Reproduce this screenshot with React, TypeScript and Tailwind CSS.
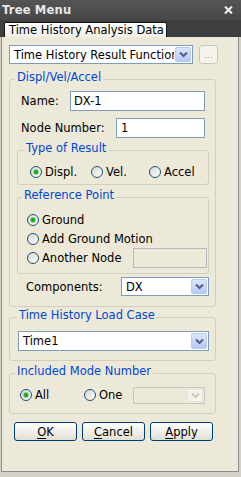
import React from "react";

function Chevron({ disabled }: { disabled?: boolean }) {
  return (
    <svg width="9" height="7" viewBox="0 0 9 7">
      <path
        d="M1 1.5 L4.5 5 L8 1.5"
        fill="none"
        stroke={disabled ? "#c9c7ba" : "#4d6185"}
        strokeWidth="2"
      />
    </svg>
  );
}

function Combo({
  text,
  className,
  disabled,
}: {
  text?: string;
  className: string;
  disabled?: boolean;
}) {
  return (
    <div
      className={`flex shrink-0 items-stretch border ${
        disabled ? "border-[#c9c7ba] bg-[#ece9d8]" : "border-[#7f9db9] bg-white"
      } ${className}`}
    >
      <div className="flex min-w-0 flex-1 items-center overflow-hidden whitespace-nowrap pl-[4px]">
        {text}
      </div>
      <div
        className={`m-[1px] flex w-[16px] shrink-0 items-center justify-center rounded-[2px] border ${
          disabled
            ? "border-[#e8e6dc] bg-[#f4f3ee]"
            : "border-[#b9cbf3] bg-gradient-to-b from-[#dbe6fd] to-[#b6c9f5]"
        }`}
      >
        <Chevron disabled={disabled} />
      </div>
    </div>
  );
}

function Input({ text, className, disabled }: { text?: string; className: string; disabled?: boolean }) {
  return (
    <div
      className={`flex shrink-0 items-center border pl-[3px] ${
        disabled ? "border-[#b5b9be] bg-[#ece9d8]" : "border-[#7f9db9] bg-white"
      } ${className}`}
    >
      {text}
    </div>
  );
}

function Radio({ checked }: { checked?: boolean }) {
  return (
    <span className="flex h-[12px] w-[12px] shrink-0 items-center justify-center rounded-full border border-[#1c5180] bg-gradient-to-br from-[#d8d6cc] to-white">
      {checked && (
        <span className="h-[4px] w-[4px] rounded-full bg-[#21a121] shadow-[0_0_0_1px_#7cd87c]" />
      )}
    </span>
  );
}

function RadioItem({ label, checked, className }: { label: string; checked?: boolean; className?: string }) {
  return (
    <div className={`flex items-center gap-[3px] ${className ?? ""}`}>
      <Radio checked={checked} />
      <span>{label}</span>
    </div>
  );
}

function Group({
  label,
  legendClass,
  className,
  children,
}: {
  label: string;
  legendClass: string;
  className?: string;
  children: React.ReactNode;
}) {
  return (
    <fieldset className={`rounded-[3px] border border-[#d0d0bf] p-0 ${className ?? ""}`}>
      <legend className={`px-[2px] pb-[4px] leading-[14px] text-[#0046d5] ${legendClass}`}>{label}</legend>
      {children}
    </fieldset>
  );
}

function Btn({ first, rest }: { first: string; rest: string }) {
  return (
    <div className="flex h-[19px] w-[63px] items-center justify-center rounded-[3px] border border-[#003c74] bg-gradient-to-b from-white to-[#e2dfd3]">
      <span>
        <span className="underline underline-offset-[2px]">{first}</span>
        {rest}
      </span>
    </div>
  );
}

export default function App() {
  return (
    <div className="flex h-[477px] w-[241px] flex-col bg-[#d4d0c8] font-['DejaVu_Sans',sans-serif] text-[11.5px] leading-[14px] text-black">
      {/* title bar */}
      <div className="flex h-[20px] shrink-0 items-center justify-between bg-gradient-to-b from-[#555555] to-[#474747] pl-[2px] pr-[8px]">
        <span className="text-[11.5px] font-bold tracking-[0.2px] text-[#e8e8e8]">Tree Menu</span>
        <svg width="9" height="8" viewBox="0 0 9 8">
          <path d="M1 0.5 L8 7.5 M8 0.5 L1 7.5" stroke="#f2f2f2" strokeWidth="2" />
        </svg>
      </div>
      {/* tab strip */}
      <div className="flex h-[17px] shrink-0 items-end bg-[#3f3f3f] pl-[4px]">
        <div className="flex h-[15px] w-[163px] items-center rounded-t-[2px] border border-b-0 border-[#151515] bg-gradient-to-b from-white to-[#f1efe6] pl-[4px] leading-[13px]">
          Time History Analysis Data
        </div>
      </div>
      {/* body */}
      <div className="ml-[1px] flex h-[435px] w-[238px] shrink-0 flex-col border-x border-b border-[#8e8e8e] bg-[#ece9d8] pt-[8px]">
        {/* top select row */}
        <div className="ml-[7px] flex items-center gap-[6px]">
          <Combo text="Time History Result Function" className="h-[19px] w-[184px]" />
          <div className="flex h-[19px] w-[19px] items-end justify-center rounded-[3px] border border-[#c9c7ba] bg-[#f5f4ea] pb-[3px] text-[9px] leading-[9px] text-[#aca899]">
            ...
          </div>
        </div>

        {/* Displ/Vel/Accel */}
        <Group label="Displ/Vel/Accel" legendClass="ml-[5px]" className="ml-[7px] mt-[6px] w-[207px]">
          <div className="flex flex-col pb-[10px] pl-[7px] pr-[6px] pt-[3px]">
            <div className="flex h-[20px] items-center">
              <span className="ml-[4px] w-[49px]">Name:</span>
              <Input text="DX-1" className="h-[20px] w-[135px]" />
            </div>
            <div className="mt-[7px] flex h-[20px] items-center">
              <span className="ml-[4px] w-[95px]">Node Number:</span>
              <Input text="1" className="h-[20px] w-[89px] pl-[4px]" />
            </div>

            <Group label="Type of Result" legendClass="ml-[6px]" className="mt-[3px] w-[192px]">
              <div className="flex h-[14px] items-center pl-[12px] mt-[6px] mb-[5px]">
                <RadioItem label="Displ." checked className="w-[61px]" />
                <RadioItem label="Vel." className="w-[58px]" />
                <RadioItem label="Accel" />
              </div>
            </Group>

            <Group label="Reference Point" legendClass="ml-[4px]" className="mt-[3px] w-[192px]">
              <div className="flex flex-col pb-[5px] pl-[9px] pr-[1px] pt-[4px]">
                <RadioItem label="Ground" checked className="h-[19px]" />
                <RadioItem label="Add Ground Motion" className="h-[19px]" />
                <div className="flex h-[20px] items-center justify-between">
                  <RadioItem label="Another Node" />
                  <Input disabled className="h-[20px] w-[74px]" />
                </div>
              </div>
            </Group>

            <div className="mt-[3px] flex h-[19px] items-center">
              <span className="ml-[9px] w-[95px]">Components:</span>
              <Combo text="DX" className="h-[19px] w-[88px]" />
            </div>
          </div>
        </Group>

        {/* Time History Load Case */}
        <Group label="Time History Load Case" legendClass="ml-[7px]" className="ml-[7px] mt-[1px] w-[207px]">
          <div className="pb-[9px] pl-[8px] pt-[5px]">
            <Combo text="Time1" className="h-[20px] w-[191px]" />
          </div>
        </Group>

        {/* Included Mode Number */}
        <Group label="Included Mode Number" legendClass="ml-[5px]" className="ml-[7px] mt-[3px] w-[207px]">
          <div className="flex h-[18px] items-center pl-[10px] mt-[4px] mb-[9px]">
            <RadioItem label="All" checked className="w-[64px]" />
            <RadioItem label="One" className="w-[49px]" />
            <Combo disabled className="h-[17px] w-[72px]" />
          </div>
        </Group>

        {/* buttons */}
        <div className="ml-[12px] mt-[8px] flex gap-[5px]">
          <Btn first="O" rest="K" />
          <Btn first="C" rest="ancel" />
          <Btn first="A" rest="pply" />
        </div>
      </div>
    </div>
  );
}
